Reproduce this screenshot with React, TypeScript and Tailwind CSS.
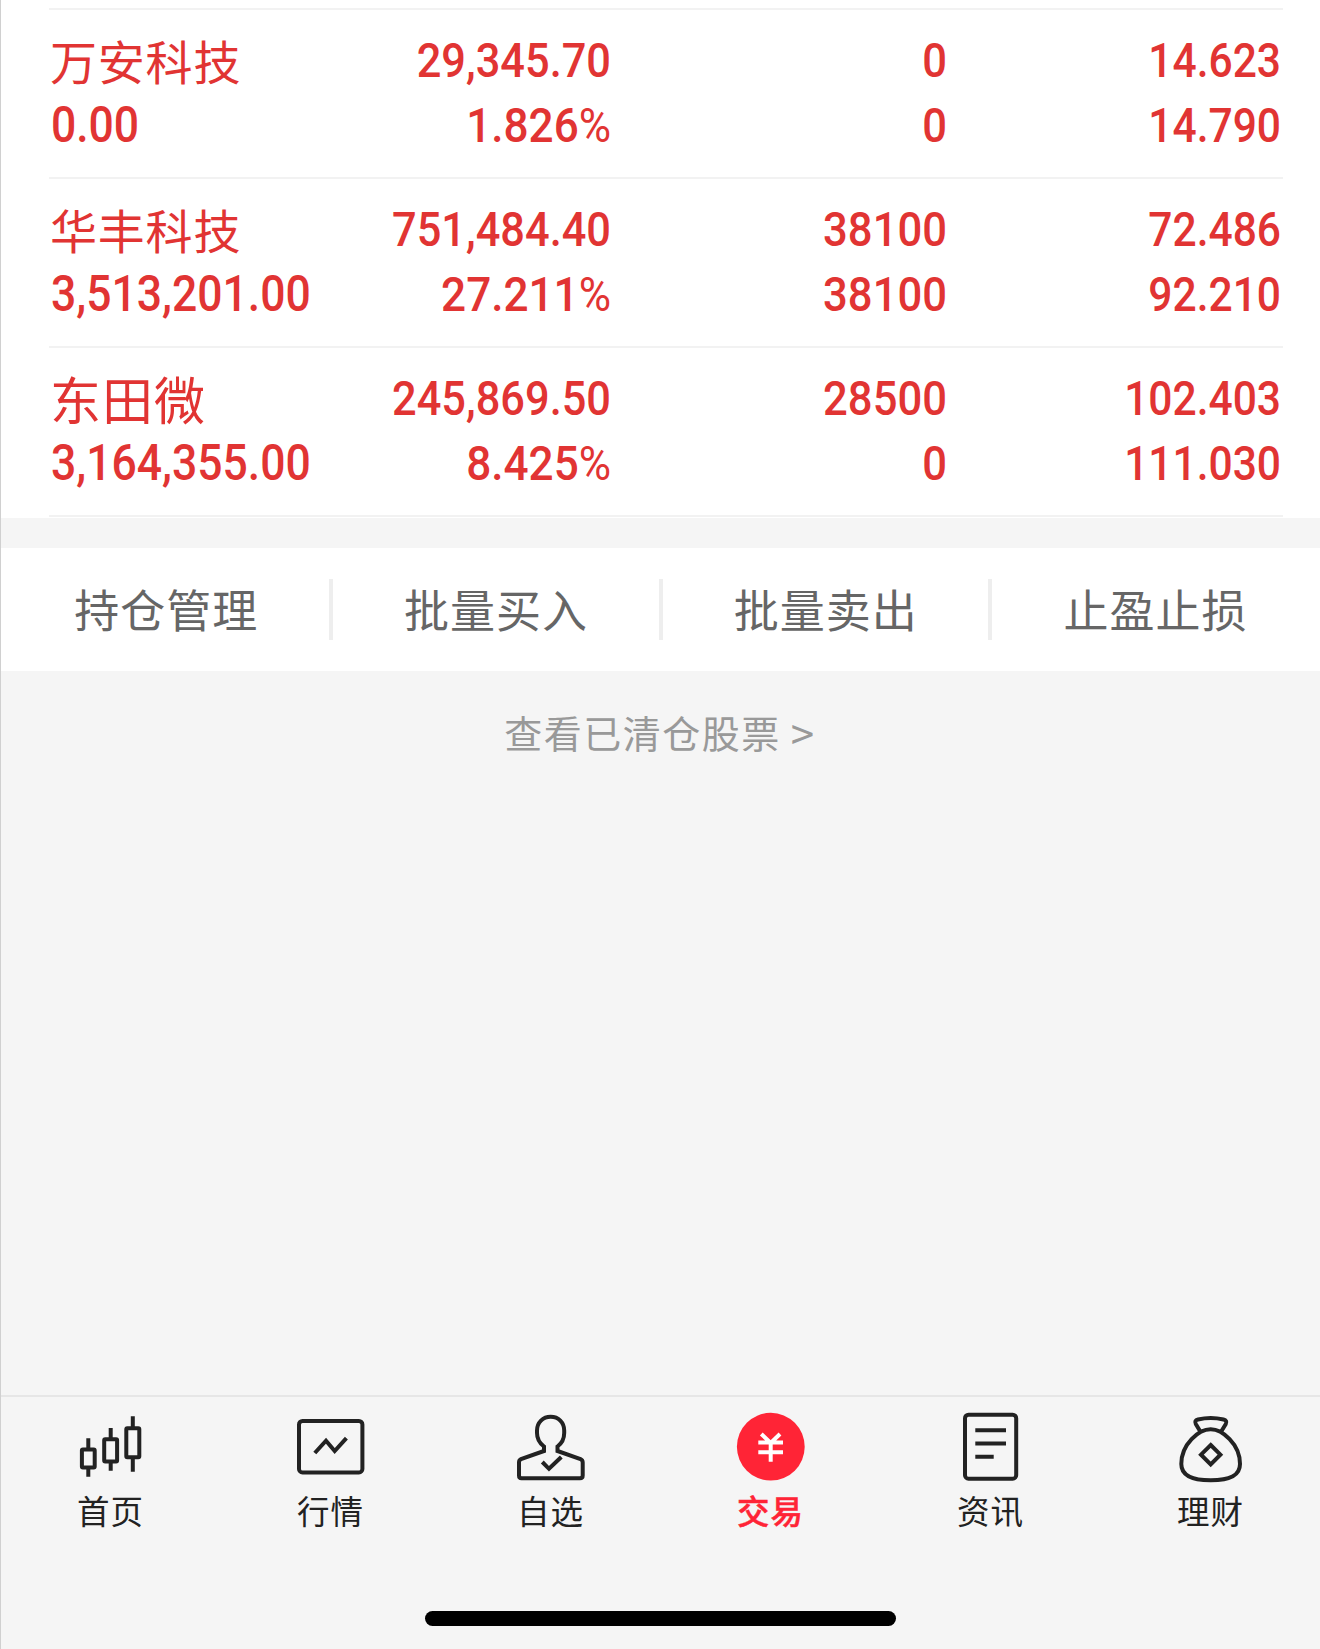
import React from "react";
import clsx from "clsx";

interface Holding {
  name: string;
  wide?: boolean;
  marketValue: string;
  profit: string;
  profitRate: string;
  amount: string;
  available: string;
  cost: string;
  price: string;
}

const holdings: Holding[] = [
  {
    name: "万安科技",
    marketValue: "0.00",
    profit: "29,345.70",
    profitRate: "1.826",
    amount: "0",
    available: "0",
    cost: "14.623",
    price: "14.790",
  },
  {
    name: "华丰科技",
    marketValue: "3,513,201.00",
    profit: "751,484.40",
    profitRate: "27.211",
    amount: "38100",
    available: "38100",
    cost: "72.486",
    price: "92.210",
  },
  {
    name: "东田微",
    wide: true,
    marketValue: "3,164,355.00",
    profit: "245,869.50",
    profitRate: "8.425",
    amount: "28500",
    available: "0",
    cost: "102.403",
    price: "111.030",
  },
];

const actions = ["持仓管理", "批量买入", "批量卖出", "止盈止损"];

const TabIcon: React.FC<{ children: React.ReactNode }> = ({ children }) => (
  <svg width="72" height="78" viewBox="0 0 72 78" fill="none" stroke="#222" strokeWidth="4">
    {children}
  </svg>
);

const tabs = [
  {
    label: "首页",
    icon: (
      <TabIcon>
        <rect x="7.9" y="41.5" width="12.8" height="18" rx="1" />
        <path d="M14.3 30.3V41M14.3 60V68.7" />
        <rect x="30.2" y="31.2" width="12.9" height="22.2" rx="1" />
        <path d="M36.7 20V31M36.7 53.5V62.7" />
        <rect x="52.3" y="20.3" width="13" height="29" rx="1" />
        <path d="M58.8 8.3V20M58.8 49.5V63.7" />
      </TabIcon>
    ),
  },
  {
    label: "行情",
    icon: (
      <TabIcon>
        <rect x="5" y="13" width="63.4" height="51.4" rx="3.5" />
        <path d="M20.8 45L32 32.7L40.7 43L52.4 30.2" />
      </TabIcon>
    ),
  },
  {
    label: "自选",
    icon: (
      <TabIcon>
        <path d="M30 43V38.5C26 35.5 23 30.5 23 25V22.5C23 14.5 29 8.7 36.7 8.7S50.2 14.5 50.2 22.5V25C50.2 30.5 47.5 35.5 43.5 38.5V43L66.5 51Q68.7 52 68.7 54.5V67.5Q68.7 70.3 66 70.3H7.5Q5 70.3 5 67.5V54.5Q5 52 7 51Z" />
        <path d="M28.3 54L35 60.8L47.3 49" />
      </TabIcon>
    ),
  },
  {
    label: "交易",
    active: true,
    icon: (
      <TabIcon>
        <circle cx="36.8" cy="38.7" r="33.9" fill="#ff2436" stroke="none" />
        <path stroke="#fff" d="M27.3 26L36.7 35L46 26M24.3 34.6H49M24.3 44.3H49M36.7 34V53.7" />
      </TabIcon>
    ),
  },
  {
    label: "资讯",
    icon: (
      <TabIcon>
        <rect x="11" y="6.7" width="51.2" height="64" rx="3.5" />
        <path d="M21.3 22.2H52M21.3 35.5H52M21.3 48.8H39.7" />
      </TabIcon>
    ),
  },
  {
    label: "理财",
    icon: (
      <TabIcon>
        <path d="M36.7 21.3C25 21.3 7.3 36 7.3 56C7.3 68 18 72.3 36.7 72.3S66 68 66 56C66 36 48 21.3 36.7 21.3Z" />
        <path d="M26 23L21.8 16Q20 12.5 24 11.5Q36.7 8.5 49.5 11.5Q53.5 12.5 51.8 16L47.5 23" />
        <path d="M36.7 37L46.4 46.7L36.7 56.4L27 46.7Z" />
      </TabIcon>
    ),
  },
];

const Num: React.FC<{ children: React.ReactNode; className: string }> = ({ children, className }) => (
  <div className={clsx("h-[65px] whitespace-nowrap font-[Roboto,sans-serif] leading-[65px] font-medium", className)}>
    {children}
  </div>
);

const HoldingRow: React.FC<{ item: Holding }> = ({ item }) => (
  <div className="flex h-[169px] border-b-2 border-[#f2f2f2] pt-[18px] text-[#e13433]">
    <div className="w-[280px] pl-[1px]">
      <div
        className={clsx(
          "h-[65px] leading-[64px] whitespace-nowrap",
          item.wide ? "text-[51px] tracking-[1px]" : "text-[47px] tracking-[0.8px]",
        )}
      >
        {item.name}
      </div>
      <Num className="origin-left scale-x-[0.89] pl-[1px] text-[50px]">{item.marketValue}</Num>
    </div>
    <div className="w-[282px] text-right">
      <Num className="origin-right scale-x-[0.885] text-[49px]">{item.profit}</Num>
      <Num className="origin-right scale-x-[0.9] text-[49px]">
        {item.profitRate}
        <span className="font-normal">%</span>
      </Num>
    </div>
    <div className="w-[336px] text-right">
      <Num className="origin-right scale-x-[0.89] text-[49px]">{item.amount}</Num>
      <Num className="origin-right scale-x-[0.89] text-[49px]">{item.available}</Num>
    </div>
    <div className="w-[334px] text-right">
      <Num className="origin-right scale-x-[0.868] text-[49px]">{item.cost}</Num>
      <Num className="origin-right scale-x-[0.868] text-[49px]">{item.price}</Num>
    </div>
  </div>
);

export default function App() {
  return (
    <div className="relative flex h-[1649px] w-[1320px] flex-col overflow-hidden bg-[#f5f5f5] font-['Noto_Sans_CJK_SC',sans-serif]">
      <div className="absolute inset-y-0 left-0 w-px bg-[#d0d0d0]" />
      <div className="ml-px h-[518px] bg-white pr-[37px] pl-[48px]">
        <div className="h-[10px] border-b-2 border-[#f2f2f2]" />
        {holdings.map((item) => (
          <HoldingRow key={item.name} item={item} />
        ))}
      </div>

      <div className="mt-[30px] ml-px flex h-[123px] items-center bg-white">
        {actions.map((label, i) => (
          <React.Fragment key={label}>
            {i > 0 && <div className="-mx-[2px] h-[61px] w-1 shrink-0 bg-[#eee]" />}
            <button className="flex-1 pb-[1px] pl-[1px] text-center text-[45px] leading-[66px] tracking-[1px] text-[#666]">
              {label}
            </button>
          </React.Fragment>
        ))}
      </div>

      <div className="mt-[33px] text-center text-[38px] leading-[56px] tracking-[1.5px] text-[#999]">
        查看已清仓股票 <span className="inline-block translate-y-[2px] text-[42px] leading-none">&gt;</span>
      </div>

      <div className="mt-auto h-[254px] border-t-2 border-[#e6e6e6]">
        <div className="flex pt-[11px]">
          {tabs.map((tab) => (
            <div key={tab.label} className="flex flex-1 flex-col items-center">
              {tab.icon}
              <span
                className={clsx(
                  "pl-[1px] text-[32.5px] leading-[47px] tracking-[1px]",
                  tab.active ? "font-medium text-[#ff2436] [-webkit-text-stroke:0.5px]" : "text-[#222]",
                )}
              >
                {tab.label}
              </span>
            </div>
          ))}
        </div>
        <div className="mx-auto mt-[78px] h-[15px] w-[471px] rounded-full bg-black" />
      </div>
    </div>
  );
}
